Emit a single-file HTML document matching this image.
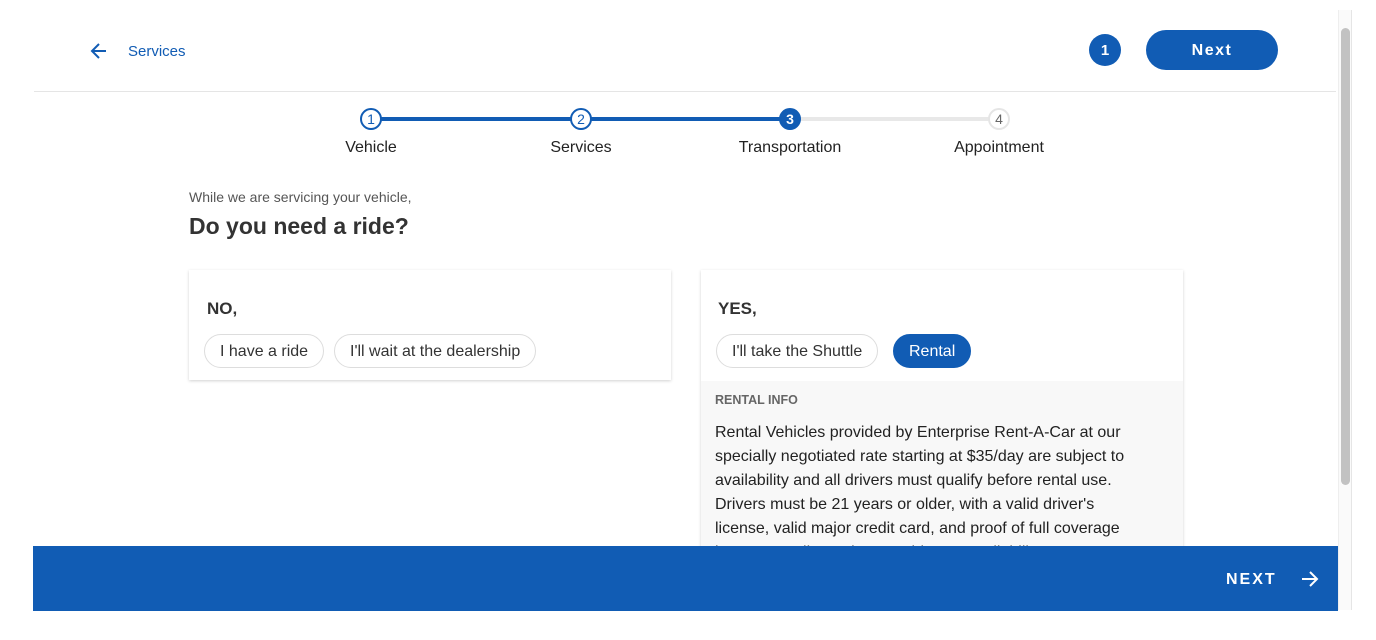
<!DOCTYPE html>
<html><head><style>
*{box-sizing:border-box;margin:0;padding:0}
body{width:1376px;height:640px;overflow:hidden;background:#fff;font-family:"Liberation Sans",sans-serif;color:#222;position:relative}
.abs{position:absolute}
.blue{color:#115cb4}
.chip{position:absolute;height:34px;border:1px solid #ddd;border-radius:17px;font-size:16px;line-height:34px;padding:0 15px;color:#333;white-space:nowrap}
.step{position:absolute;width:22px;height:22px;border-radius:50%;border:2px solid #115cb4;background:#fff;font-size:14px;line-height:18px;text-align:center;color:#115cb4}
.lbl{position:absolute;font-size:16px;width:160px;text-align:center;top:139px}
</style></head><body>
<svg class="abs" style="left:90px;top:42px" width="18" height="18" viewBox="0 0 18 18"><path d="M16 9H3M9 2L2 9l7 7" fill="none" stroke="#115cb4" stroke-width="2"/></svg>
<div class="abs blue" style="left:128px;top:43px;font-size:15px">Services</div>
<div class="abs" style="left:1089px;top:34px;width:32px;height:32px;border-radius:50%;background:#115cb4;color:#fff;font-weight:bold;font-size:15px;text-align:center;line-height:34px">1</div>
<div class="abs" style="left:1146px;top:30px;width:132px;height:40px;border-radius:20px;background:#115cb4;color:#fff;font-weight:bold;font-size:16px;letter-spacing:1.5px;text-align:center;line-height:41px">Next</div>
<div class="abs" style="left:34px;top:91px;width:1302px;height:1px;background:#e5e5e5"></div>
<div class="abs" style="left:371px;top:117px;width:419px;height:4px;background:#115cb4"></div>
<div class="abs" style="left:790px;top:117px;width:209px;height:4px;background:#e8e8e8"></div>
<div class="step" style="left:360px;top:108px">1</div>
<div class="step" style="left:570px;top:108px">2</div>
<div class="step" style="left:779px;top:108px;background:#115cb4;color:#fff;font-weight:bold">3</div>
<div class="step" style="left:988px;top:108px;border-color:#e5e5e5;color:#666">4</div>
<div class="lbl" style="left:291px">Vehicle</div>
<div class="lbl" style="left:501px">Services</div>
<div class="lbl" style="left:710px">Transportation</div>
<div class="lbl" style="left:919px">Appointment</div>
<div class="abs" style="left:189px;top:189px;font-size:14px;color:#555">While we are servicing your vehicle,</div>
<div class="abs" style="left:189px;top:213px;font-size:23px;font-weight:bold;color:#333">Do you need a ride?</div>
<div class="abs" style="left:189px;top:270px;width:482px;height:110px;background:#fff;box-shadow:0 1px 3px rgba(0,0,0,.18)"></div>
<div class="abs" style="left:207px;top:299px;font-size:17px;font-weight:bold;color:#333">NO,</div>
<div class="chip" style="left:204px;top:334px">I have a ride</div>
<div class="chip" style="left:334px;top:334px">I'll wait at the dealership</div>
<div class="abs" style="left:701px;top:270px;width:482px;height:300px;background:#fff;box-shadow:0 1px 3px rgba(0,0,0,.18)"></div>
<div class="abs" style="left:718px;top:299px;font-size:17px;font-weight:bold;color:#333">YES,</div>
<div class="chip" style="left:716px;top:334px">I'll take the Shuttle</div>
<div class="chip" style="left:893px;top:334px;background:#115cb4;border-color:#115cb4;color:#fff">Rental</div>
<div class="abs" style="left:701px;top:381px;width:482px;height:200px;background:#f8f8f8"></div>
<div class="abs" style="left:715px;top:393px;font-size:12.5px;font-weight:bold;color:#666">RENTAL INFO</div>
<div class="abs" style="left:715px;top:421px;width:470px;font-size:16px;line-height:24px;color:#222;white-space:nowrap">Rental Vehicles provided by Enterprise Rent-A-Car at our<br>specially negotiated rate starting at $35/day are subject to<br>availability and all drivers must qualify before rental use.<br>Drivers must be 21 years or older, with a valid driver's<br>license, valid major credit card, and proof of full coverage<br>insurance. All rentals are subject to availability.</div>
<div class="abs" style="left:33px;top:546px;width:1305px;height:65px;background:#115cb4"></div>
<div class="abs" style="left:1226px;top:571px;color:#fff;font-weight:bold;font-size:16px;letter-spacing:2px">NEXT</div>
<svg class="abs" style="left:1300px;top:570px" width="20" height="18" viewBox="0 0 20 18"><path d="M2 9h15M10 2l7 7-7 7" fill="none" stroke="#fff" stroke-width="2"/></svg>
<div class="abs" style="left:1338px;top:10px;width:14px;height:600px;background:#fafafa;border-left:1px solid #eee;border-right:1px solid #e5e5e5"></div>
<div class="abs" style="left:1341px;top:28px;width:9px;height:457px;border-radius:5px;background:#c2c2c2"></div>
</body></html>
